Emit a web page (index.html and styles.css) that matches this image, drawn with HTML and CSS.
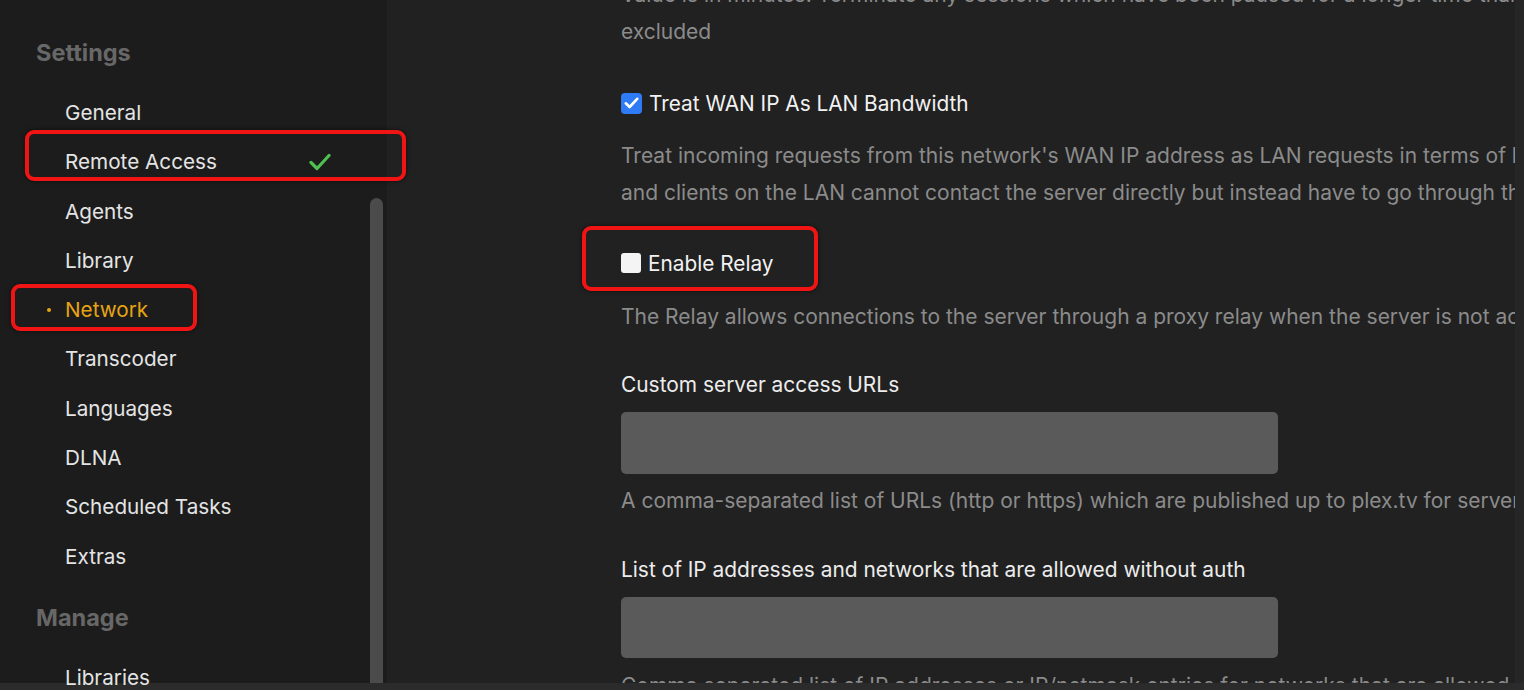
FILE: index.html
```html
<!DOCTYPE html>
<html>
<head>
<meta charset="utf-8">
<link rel="stylesheet" href="styles.css">
</head>
<body>
<div class="app">
  <aside class="sidebar">
    <nav class="nav">
      <h2 class="nav-heading">Settings</h2>
      <div class="nav-item">General</div>
      <div class="nav-item marked">Remote Access
        <svg class="ok" width="22" height="18" viewBox="0 0 22 18"><path d="M2 9.5 L8 15.5 L20 2.5" fill="none" stroke="#4fbf4f" stroke-width="3.2" stroke-linecap="round" stroke-linejoin="round"/></svg>
        <span class="mark mark-remote"></span>
      </div>
      <div class="nav-item">Agents</div>
      <div class="nav-item">Library</div>
      <div class="nav-item active"><span class="dot"></span>Network<span class="mark mark-network"></span></div>
      <div class="nav-item">Transcoder</div>
      <div class="nav-item">Languages</div>
      <div class="nav-item">DLNA</div>
      <div class="nav-item">Scheduled Tasks</div>
      <div class="nav-item">Extras</div>
      <h2 class="nav-heading manage">Manage</h2>
      <div class="nav-item">Libraries</div>
    </nav>
    <div class="scroll"></div>
  </aside>
  <main class="main">
    <div class="content">
      <p class="desc first">Value is in minutes. Terminate any sessions which have been paused for a longer time than this. Sessions from local network are<br>excluded</p>

      <label class="check-row">
        <span class="box checked"><svg width="15" height="12" viewBox="0 0 15 12"><path d="M1.8 6.3 L5.6 10 L13.2 1.8" fill="none" stroke="#fff" stroke-width="2.6" stroke-linecap="round" stroke-linejoin="round"/></svg></span>
        <span class="check-label">Treat WAN IP As LAN Bandwidth</span>
      </label>
      <p class="desc">Treat incoming requests from this network's WAN IP address as LAN requests in terms of bandwidth. This often occurs when DNS rebinding protection is in place<br>and clients on the LAN cannot contact the server directly but instead have to go through the WAN IP address.</p>

      <label class="check-row relay">
        <span class="box"></span>
        <span class="check-label">Enable Relay</span>
        <span class="mark mark-relay"></span>
      </label>
      <p class="desc">The Relay allows connections to the server through a proxy relay when the server is not accessible otherwise.</p>

      <div class="field-label">Custom server access URLs</div>
      <div class="input"></div>
      <p class="desc tight">A comma-separated list of URLs (http or https) which are published up to plex.tv for server discovery.</p>

      <div class="field-label">List of IP addresses and networks that are allowed without auth</div>
      <div class="input"></div>
      <p class="desc tight">Comma separated list of IP addresses or IP/netmask entries for networks that are allowed to access the server without logging in.</p>
    </div>
    <div class="edge"></div>
  </main>
</div>
<div class="bottom-bar"></div>
</body>
</html>
```
FILE: styles.css
```css
* { box-sizing: border-box; }
html, body { margin: 0; padding: 0; }
body {
  width: 1524px;
  height: 690px;
  overflow: hidden;
  background: #212121;
  font-family: Inter, "Liberation Sans", Arial, sans-serif;
  display: flex;
  flex-direction: column;
}
.app {
  flex: 1;
  display: flex;
  min-height: 0;
}
.sidebar {
  width: 387px;
  flex: none;
  background: #1c1c1c;
  display: flex;
  position: relative;
  z-index: 2;
}
.nav {
  flex: 1;
  padding-top: 32.5px;
}
.nav-heading {
  margin: 0 0 15.5px 36px;
  height: 40px;
  line-height: 40px;
  font-size: 23.5px;
  font-weight: 700;
  color: #676767;
}
.nav-heading.manage { margin-top: 17px; margin-bottom: 15px; }
.nav-item {
  height: 49.3px;
  line-height: 49.3px;
  padding-left: 65px;
  font-size: 20.7px;
  color: #e4e4e4;
  position: relative;
  white-space: nowrap;
}
.nav-item .ok {
  position: absolute;
  left: 309px;
  top: 16px;
}
.nav-item.active { color: #e6a413; }
.dot {
  position: absolute;
  left: 47px;
  top: 23px;
  width: 4px;
  height: 4px;
  border-radius: 50%;
  background: #e6a413;
}
.mark {
  position: absolute;
  border: 4px solid #f01414;
  border-radius: 9px;
  box-shadow: 0 0 4px rgba(0,0,0,0.6);
  pointer-events: none;
}
.mark-remote { left: 25px; top: -7.5px; width: 381px; height: 51px; }
.mark-network { left: 11px; top: -1.5px; width: 186px; height: 47px; }
.scroll {
  width: 13px;
  margin: 198px 4px 0 0;
  background: #4b4b4b;
  border-radius: 7px 7px 0 0;
}
.main {
  flex: 1;
  display: flex;
  overflow: hidden;
  min-width: 0;
}
.content {
  flex: 1;
  min-width: 0;
  padding-left: 234px;
  margin-top: -24.5px;
}
.edge {
  width: 9px;
  flex: none;
  background: #262626;
}
.desc {
  margin: 0;
  font-size: 21px;
  line-height: 37px;
  color: #8b8b8b;
  white-space: nowrap;
}
.check-row {
  display: flex;
  align-items: center;
  height: 30px;
  margin-top: 38.5px;
  margin-bottom: 18.5px;
  position: relative;
}
.check-row.relay { margin-top: 37.5px; margin-bottom: 19.5px; }
.box {
  width: 20px;
  height: 20px;
  border-radius: 3px;
  background: #f4f4f4;
  margin-right: 7px;
  display: flex;
  align-items: center;
  justify-content: center;
}
.box.checked {
  width: 21px;
  height: 21px;
  border-radius: 4px;
  background: #2f7bf5;
}
.check-label {
  font-size: 20.8px;
  color: #f2f2f2;
}
.mark-relay { left: -39px; top: -22px; width: 236px; height: 65px; }
.field-label {
  margin-top: 35.5px;
  height: 30px;
  line-height: 30px;
  font-size: 20.9px;
  color: #ececec;
}
.input {
  width: 657px;
  height: 61.5px;
  margin-top: 12px;
  background: #5a5a5a;
  border-radius: 5px;
}
.desc.tight { margin-top: 8.5px; }
.bottom-bar {
  height: 7px;
  flex: none;
  background: #2b2b2b;
}
```
